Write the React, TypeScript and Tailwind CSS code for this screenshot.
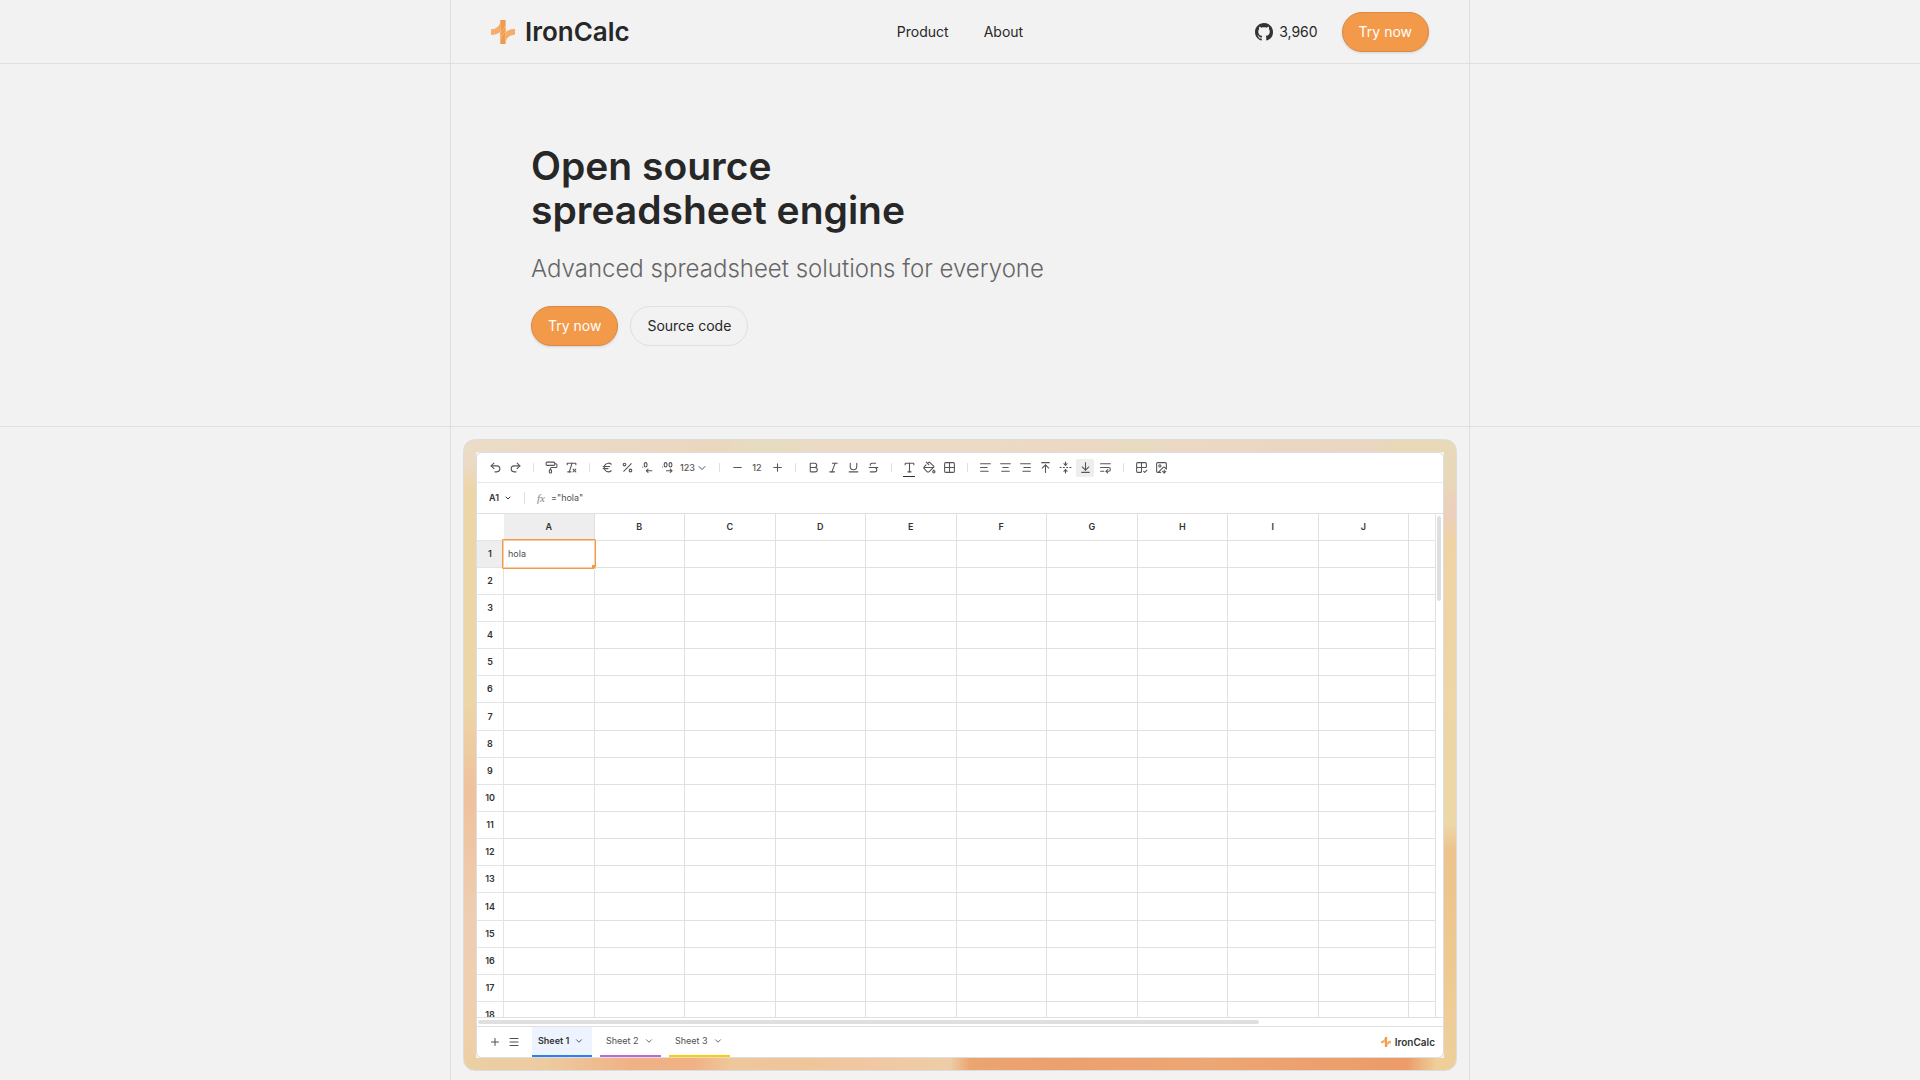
import type { ComponentType } from 'react';
import {
  AlignCenter,
  AlignLeft,
  AlignRight,
  ArrowDownToLine,
  ArrowUpToLine,
  Bold,
  ChevronDown,
  DecimalsArrowLeft,
  DecimalsArrowRight,
  Euro,
  FoldVertical,
  Grid2x2,
  Grid2x2Check,
  ImageDown,
  Italic,
  Menu,
  Minus,
  PaintBucket,
  PaintRoller,
  Percent,
  Plus,
  Redo2,
  RemoveFormatting,
  Strikethrough,
  Type,
  Underline,
  Undo2,
  WrapText,
} from 'lucide-react';

const columns = ['A', 'B', 'C', 'D', 'E', 'F', 'G', 'H', 'I', 'J'];
const rows = Array.from({ length: 18 }, (_, i) => i + 1);

const sheets = [
  { name: 'Sheet 1', style: 'w-[60px] bg-[#edf4ff] border-[#2f80ed] font-semibold text-[#333333]' },
  { name: 'Sheet 2', style: 'w-[61px] border-[#bb6bd9] text-[#4f4f4f]' },
  { name: 'Sheet 3', style: 'w-[61px] border-[#ffcc00] text-[#4f4f4f]' },
];

function LogoMark({ className }: { className?: string }) {
  return (
    <svg viewBox="0 0 24 24" className={className} aria-hidden="true">
      <path d="M9.300 0h5.300v24H9.300Z" fill="#f2994a" />
      <path d="M0 9.300C5.500 9.300 9.300 5.500 9.300 0.500V12C6.900 14 3.600 15 0 15Z" fill="#f5ad6c" />
      <path d="M24 14.700C18.500 14.700 14.600 18.500 14.600 23.500V12C17 10 20.400 9 24 9Z" fill="#f5ad6c" />
      <path d="M14.500 4.500C13.900 7.600 12.200 10.400 9.400 12.800M14.500 11.200C11.800 13.600 10 16.400 9.400 19.500" fill="none" stroke="#f7bd88" strokeWidth="0.8" />
    </svg>
  );
}

function GithubMark() {
  return (
    <svg viewBox="0 0 16 16" className="size-[18px] fill-[#333333]" aria-hidden="true">
      <path d="M8 0C3.580 0 0 3.580 0 8c0 3.540 2.290 6.530 5.470 7.590.4.070.55-.17.55-.38 0-.19-.01-.82-.01-1.490-2.010.37-2.530-.49-2.690-.94-.09-.23-.48-.94-.82-1.130-.28-.15-.68-.52-.01-.53.63-.01 1.080.58 1.230.82.72 1.210 1.870.87 2.330.66.070-.52.28-.87.51-1.070-1.780-.2-3.640-.89-3.640-3.950 0-.87.31-1.590.82-2.150-.08-.2-.36-1.020.08-2.120 0 0 .67-.21 2.200.82.64-.18 1.320-.27 2-.27s1.360.09 2 .27c1.530-1.040 2.200-.82 2.200-.82.44 1.100.16 1.920.08 2.120.51.56.82 1.270.82 2.150 0 3.070-1.870 3.750-3.650 3.950.29.25.54.73.54 1.480 0 1.070-.01 1.930-.01 2.200 0 .21.15.46.55.38A8.010 8.010 0 0 0 16 8c0-4.420-3.580-8-8-8Z" />
    </svg>
  );
}

interface ToolProps {
  icon: ComponentType<{ className?: string; strokeWidth?: number }>;
  label: string;
  className?: string;
}

function Tool({ icon: Icon, label, className = '' }: ToolProps) {
  return (
    <button type="button" aria-label={label} className={`flex size-[18px] shrink-0 items-center justify-center rounded-xs ${className}`}>
      <Icon className="size-[13px]" strokeWidth={2} />
    </button>
  );
}

function Divider() {
  return <div className="mr-[6px] ml-[7px] h-[9px] w-px bg-[#e0e0e0]" />;
}

function Toolbar() {
  return (
    <div className="flex h-[30px] items-center gap-[2px] border-b border-[#e8e8e8] px-[9px] text-[#555555]">
      <Tool icon={Undo2} label="Undo" />
      <Tool icon={Redo2} label="Redo" />
      <Divider />
      <Tool icon={PaintRoller} label="Copy style" />
      <Tool icon={RemoveFormatting} label="Clear formatting" />
      <Divider />
      <Tool icon={Euro} label="Currency" />
      <Tool icon={Percent} label="Percent" />
      <Tool icon={DecimalsArrowLeft} label="Fewer decimals" />
      <Tool icon={DecimalsArrowRight} label="More decimals" />
      <button type="button" className="flex h-[18px] w-8 items-center justify-between px-[2px] text-[9px] font-medium">
        123
        <ChevronDown className="size-3 shrink-0" />
      </button>
      <Divider />
      <Tool icon={Minus} label="Smaller text" />
      <span className="w-[18px] text-center text-[9px] font-medium">12</span>
      <Tool icon={Plus} label="Larger text" />
      <Divider />
      <Tool icon={Bold} label="Bold" />
      <Tool icon={Italic} label="Italic" />
      <Tool icon={Underline} label="Underline" />
      <Tool icon={Strikethrough} label="Strikethrough" />
      <Divider />
      <Tool icon={Type} label="Text color" className="relative after:absolute after:inset-x-[3px] after:bottom-0 after:h-px after:bg-[#333333]" />
      <Tool icon={PaintBucket} label="Fill color" />
      <Tool icon={Grid2x2} label="Borders" />
      <Divider />
      <Tool icon={AlignLeft} label="Align left" />
      <Tool icon={AlignCenter} label="Align center" />
      <Tool icon={AlignRight} label="Align right" />
      <Tool icon={ArrowUpToLine} label="Align top" />
      <Tool icon={FoldVertical} label="Align middle" />
      <Tool icon={ArrowDownToLine} label="Align bottom" className="bg-[#eeeeee]" />
      <Tool icon={WrapText} label="Wrap text" />
      <Divider />
      <Tool icon={Grid2x2Check} label="Grid lines" />
      <Tool icon={ImageDown} label="Export image" />
    </div>
  );
}

function FormulaBar() {
  return (
    <div className="flex h-[31px] items-center border-b border-[#e0e0e0] pl-3 text-[9px]">
      <button type="button" className="flex w-[35px] items-center gap-[5px] font-semibold text-[#333333]">
        A1
        <ChevronDown className="size-2" strokeWidth={3} />
      </button>
      <div className="h-3 w-px bg-[#e0e0e0]" />
      <label htmlFor="formula" className="w-[26px] pl-3 font-['Liberation_Serif',serif] text-[11px] text-[#828282] italic">
        fx
      </label>
      <input id="formula" className="min-w-0 flex-1 text-[#4f4f4f] outline-none" defaultValue={'="hola"'} />
    </div>
  );
}

function Grid() {
  return (
    <div className="relative h-[513px] overflow-hidden border-b border-[#e0e0e0]">
      <div className="pr-[7px]">
        <table className="w-full table-fixed border-separate border-spacing-0 text-[9px] text-[#333333]">
          <colgroup>
            <col className="w-[27px]" />
            {columns.map((c) => (
              <col key={c} />
            ))}
            <col className="w-[27px]" />
          </colgroup>
          <thead>
            <tr className="h-[27px]">
              <td className="border-b border-[#e4e4e4] p-0" />
              {columns.map((c) => (
                <th key={c} scope="col" className={`border-r border-b border-[#e0e0e0] p-0 font-semibold ${c === 'A' ? 'bg-[#eeeeee]' : ''}`}>
                  {c}
                </th>
              ))}
              <td className="border-r border-b border-[#e4e4e4] p-0" />
            </tr>
          </thead>
          <tbody>
            {rows.map((r) => (
              <tr key={r} className="h-[27px] nth-[7n]:h-7">
                <th scope="row" className={`border-r border-b border-[#e4e4e4] p-0 font-semibold ${r === 1 ? 'bg-[#eeeeee]' : ''}`}>
                  {r}
                </th>
                {columns.map((c) => (
                  <td key={c} className="relative border-r border-b border-[#e0e0e0] p-0">
                    {r === 1 && c === 'A' && (
                      <div className="absolute -inset-[2px] flex items-center rounded-[1px] border border-[#f2994a] bg-white pl-[5px] text-[#4f4f4f] shadow-[inset_0_0_0_1px_#f8cca5]">
                        hola
                        <span className="absolute right-0 bottom-0 size-[3px] bg-[#f2994a]" />
                      </div>
                    )}
                  </td>
                ))}
                <td className="border-r border-b border-[#e0e0e0] p-0" />
              </tr>
            ))}
          </tbody>
        </table>
      </div>
      <div className="absolute top-[2px] right-[2px] h-[85px] w-1 rounded-full bg-[#dfdfdf]" />
      <div className="absolute inset-x-0 bottom-0 h-[9px] border-t border-[#e0e0e0] bg-white px-px py-[2px]">
        <div className="h-1 w-[81%] rounded-full bg-[#dfdfdf]" />
      </div>
    </div>
  );
}

function SheetBar() {
  return (
    <div className="flex h-[30px] items-center pr-2 pl-3 text-[9px]">
      <button type="button" aria-label="Add sheet" className="mr-[7px] text-[#4f4f4f]">
        <Plus className="size-3" />
      </button>
      <button type="button" aria-label="Sheet list" className="mr-3 text-[#4f4f4f]">
        <Menu className="size-3" />
      </button>
      <div className="flex gap-2 self-stretch">
        {sheets.map((s) => (
          <button key={s.name} type="button" className={`flex items-center gap-[5px] border-b-2 pl-[6px] whitespace-nowrap ${s.style}`}>
            {s.name}
            <ChevronDown className="size-[10px] shrink-0" />
          </button>
        ))}
      </div>
      <div className="ml-auto flex items-center gap-1 text-[10px] font-semibold text-[#333333]">
        <LogoMark className="size-[10px]" />
        IronCalc
      </div>
    </div>
  );
}

function TryNow() {
  return (
    <a href="#try" className="flex h-10 items-center rounded-full border border-[#d98a43] bg-[#f2994a] px-4 text-sm text-white shadow-sm">
      Try now
    </a>
  );
}

export default function App() {
  return (
    <div className="flex min-h-screen flex-col bg-[#f2f2f2] font-['Inter',sans-serif] text-[#272727] antialiased">
      <header className="border-b border-[#dfdfdf]">
        <div className="mx-auto flex h-[63px] w-full max-w-[1020px] items-center justify-between border-x border-[#dfdfdf] px-10">
          <a href="#home" className="flex flex-1 items-center gap-[10px] text-[26px] leading-8 font-semibold">
            <LogoMark className="size-6" />
            IronCalc
          </a>
          <nav className="flex gap-[35px] text-sm">
            <a href="#product">Product</a>
            <a href="#about">About</a>
          </nav>
          <div className="flex flex-1 items-center justify-end gap-6 text-sm">
            <a href="#github" className="flex items-center gap-[6px]">
              <GithubMark />
              3,960
            </a>
            <TryNow />
          </div>
        </div>
      </header>

      <section className="border-b border-[#dfdfdf]">
        <div className="mx-auto w-full max-w-[1020px] border-x border-[#dfdfdf] px-20 py-20">
          <h1 className="text-[39px] leading-[44px] font-semibold">
            Open source
            <br />
            spreadsheet engine
          </h1>
          <p className="mt-5 text-2xl leading-[34px] font-light text-[#666666]">Advanced spreadsheet solutions for everyone</p>
          <div className="mt-5 flex gap-3">
            <TryNow />
            <a href="#source" className="flex h-10 items-center rounded-full border border-[#dfdfdf] px-4 text-sm">
              Source code
            </a>
          </div>
        </div>
      </section>

      <section className="mx-auto w-full max-w-[1020px] flex-1 border-x border-[#dfdfdf] px-3 pt-3 pb-2">
        {/* one gradient strip per side of the frame */}
        <div className="rounded-xl border border-[#dddddd] p-3 [background:linear-gradient(to_right,#ebdcc8,#ead7c0_26%,#e6dcbf_29%,#e6dcbf_32%,#ebdac6_35%,#ebd9c3_65%,#e6dcbf_68%,#ebd9c5_71%,#ead6c2_91%,#e8d9b8_94%)_top/100%_12px_no-repeat,linear-gradient(to_right,#eccfa4,#edcba0_8%,#f0b184_17%,#f0b184_23%,#efc79d_27%,#efc59a_35%,#f1c7a2_40%,#eecda6_49%,#eba571_51%,#eca070_60%,#eda675_75%,#ec9b69_95%,#eecf9a_98%)_bottom/100%_12px_no-repeat,linear-gradient(#ebdcc8,#ebdac4_4%,#ecd5a6_8%,#ecd5a6_42%,#efc19c_56%,#eecdb0_75%,#eed0b0_90%,#edcfa4)_left/12px_100%_no-repeat,linear-gradient(#e8d9b8,#e8d8ba_7%,#ebd0bb_10%,#ebd0bb_12%,#efd3a5_16%,#ecd7a6_61%,#ecc48c_65%,#edc890_80%,#eed09c)_right/12px_100%_no-repeat]">
          <div className="overflow-hidden rounded-md border border-[#dddddd] bg-white">
            <Toolbar />
            <FormulaBar />
            <Grid />
            <SheetBar />
          </div>
        </div>
      </section>
    </div>
  );
}
